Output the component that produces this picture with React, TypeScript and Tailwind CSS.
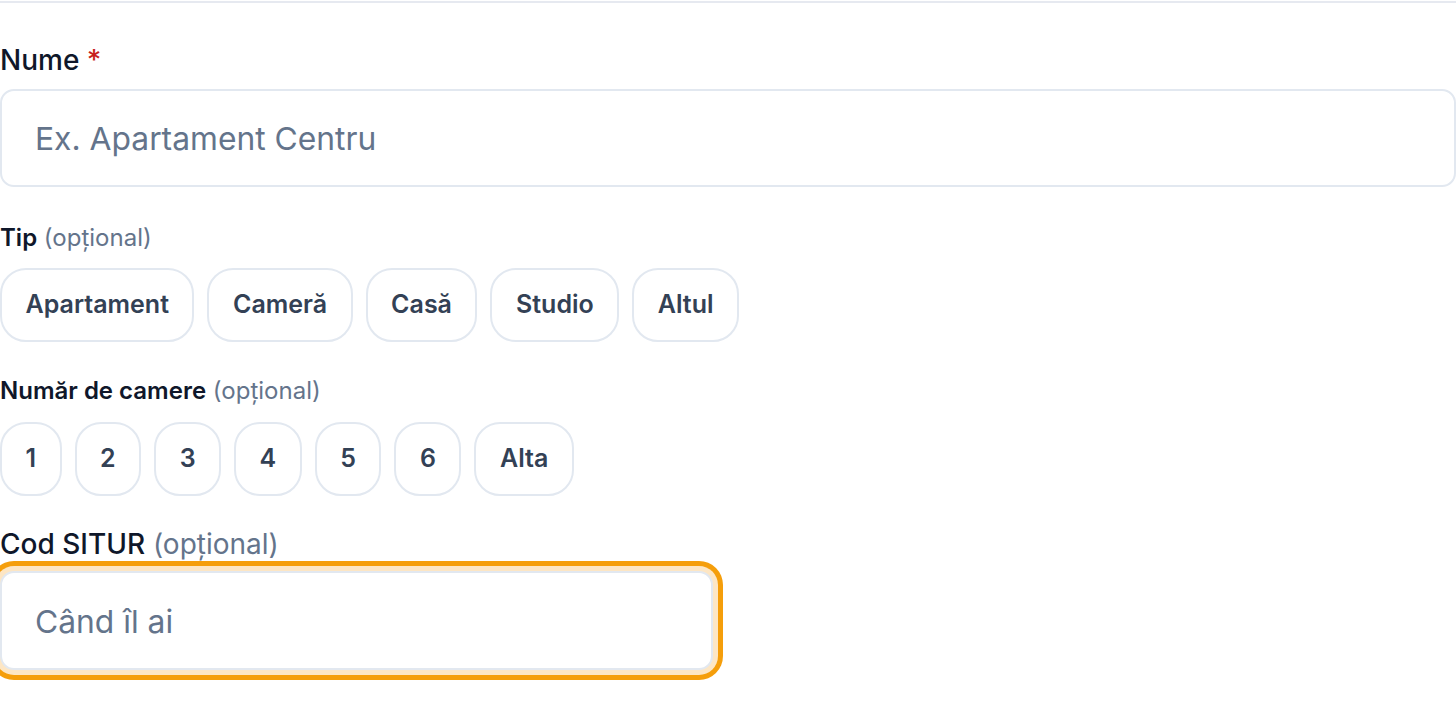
import React from "react";

const font = { fontFamily: "Inter, 'Noto Sans', sans-serif" };

function Chip({ label }: { label: string }) {
  return (
    <button
      type="button"
      className="h-[74px] px-[23.5px] pb-[2px] rounded-[26px] border-2 border-[#e2e8f0] bg-white text-[25px] font-semibold text-[#334155] leading-none flex items-center justify-center"
    >
      {label}
    </button>
  );
}

export default function App() {
  const types = ["Apartament", "Cameră", "Casă", "Studio", "Altul"];
  const rooms = ["1", "2", "3", "4", "5", "6", "Alta"];
  return (
    <div className="w-[1456px] h-[702px] bg-white overflow-hidden" style={font}>
      <div className="mt-[1px] h-[2px] bg-[#e6e9f0]" />

      <div className="mt-[36px] text-[28px] leading-[42px] font-medium text-[#0f172a]">
        Nume <span className="text-[#c81e1e]">*</span>
      </div>
      <input
        readOnly
        placeholder="Ex. Apartament Centru"
        className="mt-[8px] block w-full h-[98px] rounded-[14px] border-2 border-[#e2e8f0] bg-white px-[33px] text-[31.8px] text-[#0f172a] placeholder:text-[#64748b] outline-none"
      />

      <div className="mt-[33px] text-[24px] leading-[35px] text-[#0f172a]">
        <span className="font-semibold">Tip</span>{" "}
        <span className="font-normal text-[#64748b]">(opțional)</span>
      </div>
      <div className="mt-[13px] flex gap-[13px]">
        {types.map((t) => (
          <Chip key={t} label={t} />
        ))}
      </div>

      <div className="mt-[31px] text-[24px] leading-[35px] text-[#0f172a]">
        <span className="font-semibold">Număr de camere</span>{" "}
        <span className="font-normal text-[#64748b]">(opțional)</span>
      </div>
      <div className="mt-[14px] flex gap-[13px]">
        {rooms.map((t) => (
          <Chip key={t} label={t} />
        ))}
      </div>

      <div className="mt-[27px] text-[28px] leading-[42px] text-[#0f172a]">
        <span className="font-medium">Cod SITUR</span>{" "}
        <span className="font-normal text-[#64748b]">(opțional)</span>
      </div>
      <input
        readOnly
        placeholder="Când îl ai"
        className="mt-[6px] block w-[713px] h-[99px] rounded-[14px] border-2 border-[#e2e8f0] bg-white px-[33px] pt-[2px] text-[31.8px] text-[#0f172a] placeholder:text-[#64748b] outline-none shadow-[0_0_0_5px_#fde6c4,0_0_0_10px_#f59e0b]"
      />
    </div>
  );
}
